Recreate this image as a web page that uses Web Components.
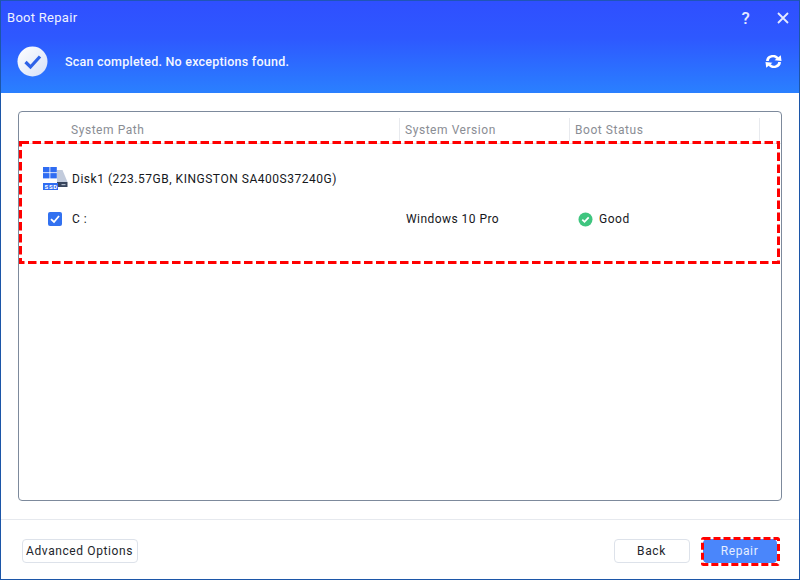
<!DOCTYPE html>
<html><head><meta charset="utf-8"><style>
html,body{margin:0;padding:0;background:#fff;overflow:hidden}
body{font-family:Roboto,"Liberation Sans",sans-serif}
</style></head><body>
<boot-window>
  <boot-header slot="header" title-text="Boot Repair" message="Scan completed. No exceptions found."></boot-header>
  <disk-table slot="body"></disk-table>
  <dialog-btn slot="left" style="width:116px">Advanced Options</dialog-btn>
  <dialog-btn slot="right" style="width:76px">Back</dialog-btn>
  <dialog-btn slot="right" primary style="width:74px;margin-left:13px">Repair</dialog-btn>
</boot-window>
<script>
function def(name,html){customElements.define(name,class extends HTMLElement{connectedCallback(){if(this.shadowRoot)return;const r=this.attachShadow({mode:'open'});r.innerHTML=typeof html==='function'?html(this):html;}})}
def('boot-window',`<style>
:host{display:flex;flex-direction:column;box-sizing:border-box;width:800px;height:580px;border:1px solid #1c56a8;border-top-color:#1f55b8;background:#fff;position:relative}
.body{flex:1;min-height:0;display:flex;padding:18px 17px 18px 17px}
.foot{height:60px;box-sizing:border-box;border-top:1px solid #e6e9ee;display:flex;align-items:center;justify-content:space-between;padding:3px 22px 0 21px}
.r{display:flex}
::slotted([slot=body]){flex:1}
</style><slot name="header"></slot><div class="body"><slot name="body"></slot></div><div class="foot"><div class="r"><slot name="left"></slot></div><div class="r"><slot name="right"></slot></div></div>`);
def('boot-header',h=>`<style>
:host{display:block;height:92px;background:linear-gradient(180deg,#2f4fff 0%,#2e58ff 40%,#2a80ff 100%);color:#fff}
.t{height:33px;display:flex;align-items:center;padding-left:6px;font-size:13px;letter-spacing:.28px;color:#eef1ff}
.sp{flex:1}.t svg{display:block}
.m{height:59px;display:flex;align-items:center;padding:0 17px 5px 16px;box-sizing:border-box}
.m b{font-weight:500;font-size:12.5px;letter-spacing:.23px;margin-left:17px;color:#f4f7ff}
.q{font-size:17px;margin-right:27px;color:#e4e9ff;font-weight:500}
.x{margin-right:10px}
</style><div class="t"><span>${h.getAttribute('title-text')}</span><span class="sp"></span><span class="q">?</span>
<svg class="x" width="12" height="12" viewBox="0 0 12 12"><path d="M1 1L11 11M11 1L1 11" stroke="#e4e9ff" stroke-width="1.800" fill="none"/></svg></div>
<div class="m"><svg width="31" height="31" viewBox="0 0 31 31"><defs><linearGradient id="g" x1="0" y1="0" x2="1" y2="1"><stop offset="0" stop-color="#fff"/><stop offset="1" stop-color="#d5e0f8"/></linearGradient></defs><circle cx="15.5" cy="15.5" r="15" fill="url(#g)"/><path d="M8.5 16L13.5 21L23 10.5" fill="none" stroke="#2d62e8" stroke-width="3.2"/></svg><b>${h.getAttribute('message')}</b><span class="sp"></span>
<svg width="17" height="13" viewBox="0 0 17 15" preserveAspectRatio="none"><path d="M2.500 7A5.500 5.500 0 0 1 12.600 3.800" fill="none" stroke="#fff" stroke-width="2.800"/><path d="M9.500 6.200L16.500 7L15.800 .4Z" fill="#fff"/><path d="M14.500 8A5.500 5.500 0 0 1 4.400 11.200" fill="none" stroke="#fff" stroke-width="2.800"/><path d="M7.500 8.800L.5 8L1.200 14.600Z" fill="#fff"/></svg></div>`);
def('disk-icon',`<style>:host{display:block;width:25px;height:24px}svg{display:block}text{font:700 6px Roboto,"Liberation Sans",sans-serif;letter-spacing:.7px}</style>
<svg width="25" height="24" viewBox="0 0 25 24"><path d="M14 3H19.500L24.500 15H14Z" fill="#c2cbdc"/><path d="M14 15H24.500V20H14Z" fill="#38455c"/><rect x="18.500" y="17" width="4" height="1.200" fill="#aeb8c8"/>
<g fill="#2f6cf2"><rect x="0" y="0" width="6.500" height="5.300"/><rect x="7.300" y="0" width="6.500" height="5.300"/><rect x="0" y="6.100" width="6.500" height="5.300"/><rect x="7.300" y="6.100" width="6.500" height="5.300"/></g>
<rect x="0" y="16" width="15" height="7" fill="#2f6cf2"/><text x="1.500" y="21.900" fill="#fff">SSD</text></svg>`);
def('disk-table',`<style>
:host{display:block;box-sizing:border-box;border:1px solid #7d8a9c;border-radius:4px;position:relative;font-size:12px;letter-spacing:.52px;color:#15171c}
.h{display:grid;grid-template-columns:381px 170px 190px;height:32px;color:#8a8d94;padding-top:6px;box-sizing:border-box;border-bottom:1px solid #e2e5ea}
.h div{padding-left:5px;height:23px;display:flex;align-items:center;border-right:1px solid #e8eaee;box-sizing:border-box;letter-spacing:.55px}
.h div:first-child{padding-left:52px}
.d{display:flex;align-items:center;height:24px;margin:23px 0 0 24px;gap:4px}
.c{display:grid;grid-template-columns:358px 173px 1fr;align-items:center;margin:18px 0 0 29px;height:20px}
.c1{display:flex;align-items:center;gap:10px}
.v{letter-spacing:.45px}
.s{display:flex;align-items:center;gap:6px;margin-left:-1px}
.box{width:14px;height:14px;display:block}
.mark{position:absolute;left:0;top:29px;width:761px;height:123px;display:block}
</style>
<div class="h"><div>System Path</div><div>System Version</div><div>Boot Status</div></div>
<div class="d"><disk-icon></disk-icon><span>Disk1 (223.57GB, KINGSTON SA400S37240G)</span></div>
<div class="c"><div class="c1"><svg class="box" viewBox="0 0 14 14"><rect width="14" height="14" rx="2" fill="#3271f0"/><path d="M3 7.200L6 10L11 4" fill="none" stroke="#fff" stroke-width="1.800"/></svg><span>C :</span></div><div class="v">Windows 10 Pro</div>
<div class="s"><svg width="15" height="15" viewBox="0 0 15 15"><circle cx="7.500" cy="7.500" r="7" fill="#3fc57f"/><path d="M4.300 7.700L6.500 9.800L10.700 5.400" fill="none" stroke="#fff" stroke-width="1.800"/></svg><span>Good</span></div></div>
<svg class="mark" viewBox="0 0 761 123"><rect x="1.500" y="1.500" width="758" height="120" fill="none" stroke="#ff0000" stroke-width="3" stroke-dasharray="8.500 3.500"/></svg>`);
def('dialog-btn',h=>`<style>
:host{display:block;box-sizing:border-box;height:24px;position:relative;font-size:12px;letter-spacing:.6px}
.b{box-sizing:border-box;height:100%;padding-right:1px;border:1px solid #dde2ea;border-radius:4px;background:#fff;color:#22252b;display:flex;align-items:center;justify-content:center}
:host([primary]) .b{background:#4a86fb;border-color:#4a86fb;color:#e6eeff}
.mk{position:absolute;left:-2px;top:-2px;display:block}
</style><div class="b"><slot></slot></div>${h.hasAttribute('primary')?'<svg class="mk" width="79" height="29" viewBox="0 0 79 29"><rect x="1.500" y="1.500" width="76" height="26" rx="1" fill="none" stroke="#ff0000" stroke-width="3" stroke-dasharray="7 3"/></svg>':''}`);
</script>
</body></html>
